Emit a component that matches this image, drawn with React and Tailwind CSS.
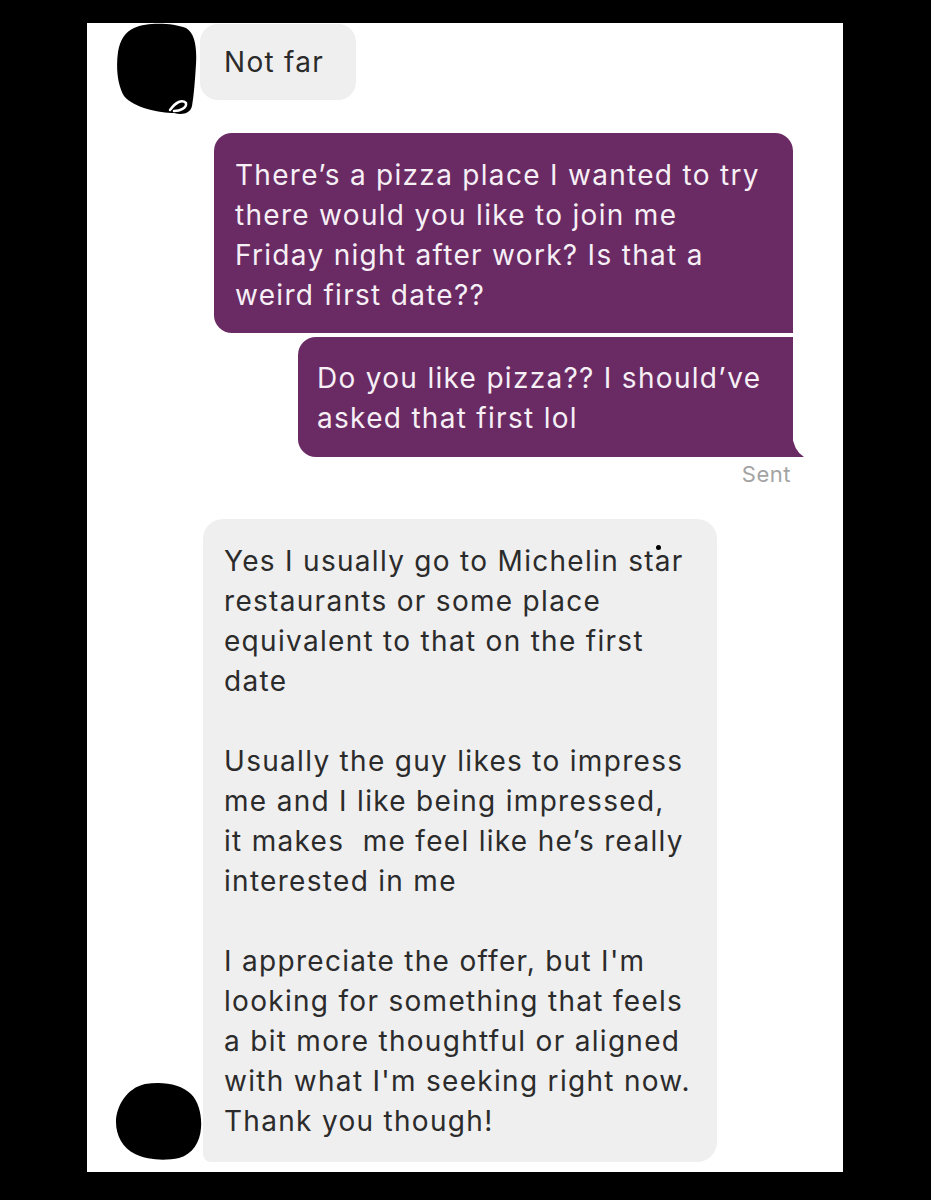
const font = { fontFamily: "Inter, 'Liberation Sans', sans-serif" };

const sentLines1 = [
  "There’s a pizza place I wanted to try",
  "there would you like to join me",
  "Friday night after work? Is that a",
  "weird first date??",
];

const sentLines2 = ["Do you like pizza?? I should’ve", "asked that first lol"];

const replyLines = [
  "Yes I usually go to Michelin star",
  "restaurants or some place",
  "equivalent to that on the first",
  "date",
  "",
  "Usually the guy likes to impress",
  "me and I like being impressed,",
  "it makes  me feel like he’s really",
  "interested in me",
  "",
  "I appreciate the offer, but I'm",
  "looking for something that feels",
  "a bit more thoughtful or aligned",
  "with what I'm seeking right now.",
  "Thank you though!",
];

function Lines({ lines }) {
  return lines.map((line, i) =>
    line ? (
      <div key={i} className="whitespace-pre h-[40px]">
        {line}
      </div>
    ) : (
      <div key={i} className="h-[40px]" />
    )
  );
}

function BlobTop() {
  return (
    <svg width="81" height="93" viewBox="0 0 81 93" className="shrink-0">
      <path
        d="M18 6 C32 0 56 1 70 6 C79 11 81 26 80 42 C79 58 78 72 76 84 C74 92 66 93 58 91 C44 91 18 86 8 74 C1 62 0 44 2 30 C4 18 9 10 18 6 Z"
        fill="#000"
      />
      <path
        d="M54 88 C60 80 66 77 70 81 C71 86 64 89 58 89"
        fill="none"
        stroke="#fff"
        strokeWidth="2.5"
        strokeLinecap="round"
      />
    </svg>
  );
}

function BlobBottom() {
  return (
    <svg width="87" height="78" viewBox="0 0 87 78" className="shrink-0">
      <path
        d="M30 2 C48 -1 66 2 76 12 C84 20 87 34 86 46 C85 60 78 72 64 76 C50 79 32 78 20 72 C8 66 1 54 1 40 C1 24 12 6 30 2 Z"
        fill="#000"
      />
    </svg>
  );
}

export default function App() {
  return (
    <div className="min-h-screen bg-black pt-[23px] pb-[28px]" style={font}>
      <div className="ml-[87px] w-[756px] h-[1149px] bg-white overflow-hidden text-[28px] leading-[40px] tracking-[1.3px]">
        <div className="flex items-start h-[76px] mt-[1px] pl-[29px]">
          <div className="-mt-[2px]">
            <BlobTop />
          </div>
          <div className="ml-[3px] w-[156px] h-[76px] rounded-[18px] bg-[#efefef] text-[#2b2b2b] pl-[24px] pt-[18px]">
            Not far
          </div>
        </div>

        <div className="flex flex-col items-end pr-[50px] mt-[33px]">
          <div className="w-[579px] h-[200px] bg-[#6a2a63] text-[#f6eff6] rounded-[18px] rounded-br-none pl-[21px] pt-[22px]">
            <Lines lines={sentLines1} />
          </div>
          <div className="relative mt-[4px] w-[495px] h-[120px] bg-[#6a2a63] text-[#f6eff6] rounded-[18px] rounded-tr-none rounded-br-none pl-[19px] pt-[21px]">
            <Lines lines={sentLines2} />
            <svg
              width="12"
              height="24"
              viewBox="0 0 12 24"
              className="absolute bottom-0 -right-[11px]"
            >
              <path d="M0 0 Q1 17 12 24 L0 24 Z" fill="#6a2a63" />
            </svg>
          </div>
          <div className="mt-[3px] mr-[2px] text-[22px] leading-[28px] tracking-[0.5px] text-[#a3a3a3]">
            Sent
          </div>
        </div>

        <div className="flex items-end pl-[28px] mt-[31px]">
          <div className="mb-[2px] relative z-10">
            <BlobBottom />
          </div>
          <div className="relative ml-[1px] w-[514px] h-[643px] rounded-[20px] rounded-bl-[8px] bg-[#efefef] text-[#2b2b2b] pl-[21px] pt-[22px]">
            <Lines lines={replyLines} />
            <span className="absolute left-[453px] top-[26px] w-[5px] h-[5px] rounded-full bg-black" />
          </div>
        </div>
      </div>
    </div>
  );
}
